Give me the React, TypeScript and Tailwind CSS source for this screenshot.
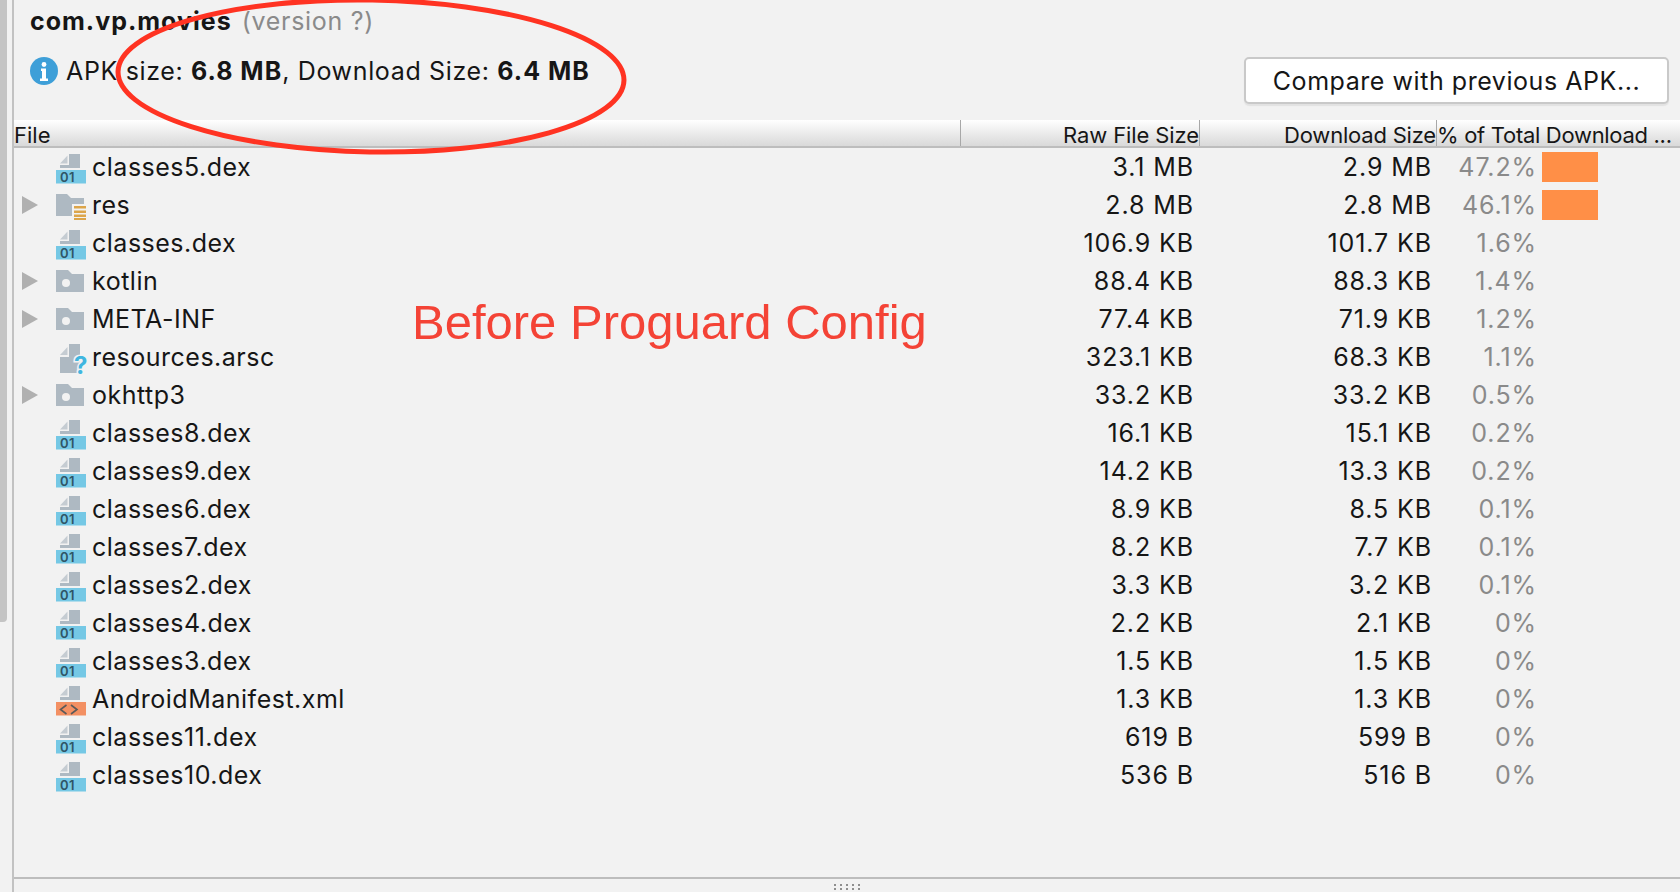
const rows = [
  { name: "classes5.dex", kind: "dex", raw: "3.1 MB", dl: "2.9 MB", pct: "47.2%", bar: true },
  { name: "res", kind: "res", raw: "2.8 MB", dl: "2.8 MB", pct: "46.1%", bar: true },
  { name: "classes.dex", kind: "dex", raw: "106.9 KB", dl: "101.7 KB", pct: "1.6%" },
  { name: "kotlin", kind: "folder", raw: "88.4 KB", dl: "88.3 KB", pct: "1.4%" },
  { name: "META-INF", kind: "folder", raw: "77.4 KB", dl: "71.9 KB", pct: "1.2%" },
  { name: "resources.arsc", kind: "unknown", raw: "323.1 KB", dl: "68.3 KB", pct: "1.1%" },
  { name: "okhttp3", kind: "folder", raw: "33.2 KB", dl: "33.2 KB", pct: "0.5%" },
  { name: "classes8.dex", kind: "dex", raw: "16.1 KB", dl: "15.1 KB", pct: "0.2%" },
  { name: "classes9.dex", kind: "dex", raw: "14.2 KB", dl: "13.3 KB", pct: "0.2%" },
  { name: "classes6.dex", kind: "dex", raw: "8.9 KB", dl: "8.5 KB", pct: "0.1%" },
  { name: "classes7.dex", kind: "dex", raw: "8.2 KB", dl: "7.7 KB", pct: "0.1%" },
  { name: "classes2.dex", kind: "dex", raw: "3.3 KB", dl: "3.2 KB", pct: "0.1%" },
  { name: "classes4.dex", kind: "dex", raw: "2.2 KB", dl: "2.1 KB", pct: "0%" },
  { name: "classes3.dex", kind: "dex", raw: "1.5 KB", dl: "1.5 KB", pct: "0%" },
  { name: "AndroidManifest.xml", kind: "xml", raw: "1.3 KB", dl: "1.3 KB", pct: "0%" },
  { name: "classes11.dex", kind: "dex", raw: "619 B", dl: "599 B", pct: "0%" },
  { name: "classes10.dex", kind: "dex", raw: "536 B", dl: "516 B", pct: "0%" },
];

function FileIcon({ kind }: { kind: string }) {
  if (kind === "folder") {
    return (
      <svg width="30" height="30" viewBox="0 0 30 30">
        <path d="M0 4h12l4 4h12v18H0z" fill="#aeb9c2" />
        <circle cx="10" cy="17" r="4" fill="#f2f2f2" />
      </svg>
    );
  }
  if (kind === "res") {
    return (
      <svg width="30" height="30" viewBox="0 0 30 30">
        <path d="M0 4h11l4 4h13v6H16v12H0z" fill="#aeb9c2" />
        <path d="M18 16h12v2.500H18zM18 20.500h12V23H18zM18 24.500h12V27H18zM18 28h12v2H18z" fill="#dca54a" />
      </svg>
    );
  }
  if (kind === "unknown") {
    return (
      <svg className="my-[-6px] mr-[-6px]" width="36" height="48" viewBox="0 -6 36 48">
        <path d="M13 5h11v29H4V18h9z" fill="#aeb9c2" />
        <path d="M4 16l7.500-8v8z" fill="#c5ccd2" />
        <text
          x="18"
          y="35"
          fontSize="24"
          fontWeight="700"
          fill="#40b6e0"
          stroke="#f2f2f2"
          strokeWidth="3"
          paintOrder="stroke"
          className="font-['Inter']"
        >
          ?
        </text>
      </svg>
    );
  }
  const xml = kind === "xml";
  return (
    <svg className="mt-[4px]" width="30" height="30" viewBox="0 0 30 30">
      <path d="M4 9.500l7.500-8v8z" fill="#c5ccd2" />
      <path d="M13 0h11v14H4v-3h9z" fill="#aeb9c2" />
      <path d="M0 16h30v13.500H0z" fill={xml ? "#f39063" : "#75c8e5"} />
      {xml ? (
        <path d="M10.500 19l-6 4.500 6 4.500M15 19l6 4.500-6 4.500" fill="none" stroke="#5a5a5a" strokeWidth="1.600" />
      ) : (
        <text x="4" y="28" fontSize="13" fontWeight="600" fill="#2f5566" className="font-['Inter']">
          01
        </text>
      )}
    </svg>
  );
}

export default function App() {
  return (
    <div className="relative flex h-[892px] w-[1680px] overflow-hidden bg-[#f2f2f2] font-['Inter',sans-serif] text-[#161616]">
      <div className="h-[622px] w-[7px] rounded-br-[4px] bg-[#c4c4c4]" />
      <div className="ml-[5px] flex min-w-0 flex-1 flex-col border-l-2 border-[#c2c2c2]">
        <div className="flex h-[120px] justify-between">
          <div className="pl-[16px]">
            <div className="flex h-[42px] items-center text-[25px] leading-none">
              <span className="font-bold tracking-[1px]">com.vp.movies</span>
              <span className="ml-[10px] tracking-[0.7px] text-[#8a8a8a]">(version ?)</span>
            </div>
            <div className="mt-[15px] flex items-center">
              <svg width="28" height="28" viewBox="0 0 28 28">
                <circle cx="14" cy="14" r="14" fill="#3e9fd8" />
                <circle cx="14" cy="7.500" r="2.400" fill="#fff" />
                <path d="M11 11.500h5v10h2v2.500h-8v-2.500h2v-7.500h-1z" fill="#fff" />
              </svg>
              <span className="ml-[8px] text-[25px] leading-none tracking-[0.65px]">
                APK size: <b className="tracking-[1px]">6.8 MB</b>, Download Size: <b className="tracking-[1px]">6.4 MB</b>
              </span>
            </div>
          </div>
          <button
            type="button"
            className="mt-[57px] mr-[11px] h-[47px] w-[425px] rounded-[5px] border-2 border-[#c9c9c9] bg-white pt-[2px] text-[25px] leading-none tracking-[0.55px] shadow-[0_2px_1px_#e2e2e2]"
          >
            Compare with previous APK...
          </button>
        </div>

        <div className="flex h-[28px] border-b-2 border-[#bdbdbd] bg-gradient-to-b from-white to-[#d9d9d9] text-[22px] leading-[30px]">
          <div className="h-full w-[947px] border-r border-[#a8a8a8]">File</div>
          <div className="h-full w-[239px] border-r border-[#a8a8a8] text-right tracking-[-0.1px] whitespace-nowrap">
            Raw File Size
          </div>
          <div className="h-full w-[237px] border-r border-[#a8a8a8] text-right tracking-[-0.2px] whitespace-nowrap">
            Download Size
          </div>
          <div className="h-full min-w-0 flex-1 tracking-[-0.3px] whitespace-nowrap">% of Total Download ...</div>
        </div>

        <div className="flex-1">
          {rows.map((row) => (
            <div key={row.name} className="flex h-[38px] items-center text-[25px] leading-none tracking-[0.5px]">
              <div className="flex w-[947px] items-center">
                <div className="ml-[8px] flex w-[34px] justify-start">
                  {row.kind === "folder" || row.kind === "res" ? (
                    <svg width="16" height="18" viewBox="0 0 16 18">
                      <path d="M0 0l16 9-16 9z" fill="#b0b0b0" />
                    </svg>
                  ) : null}
                </div>
                <FileIcon kind={row.kind} />
                <span className="ml-[6px]">{row.name}</span>
              </div>
              <div className="w-[233px] text-right tracking-[0.9px]">{row.raw}</div>
              <div className="ml-[7px] w-[231px] text-right tracking-[0.9px]">{row.dl}</div>
              <div className="ml-[7px] w-[98px] text-right tracking-[0.9px] text-[#8a8a8a]">{row.pct}</div>
              {row.bar ? <div className="ml-[5px] h-[30px] w-[56px] bg-[#ff8f47]" /> : null}
            </div>
          ))}
        </div>

        <div className="flex h-[15px] justify-center border-t-2 border-[#bdbdbd]">
          <div className="mt-[4px] h-[7px] w-[30px] bg-[radial-gradient(circle,#8f8f8f_1px,transparent_1px)] bg-[length:6px_4px]" />
        </div>
      </div>

      <svg className="pointer-events-none absolute top-0 left-0" width="700" height="170" viewBox="0 0 700 170">
        <ellipse cx="371" cy="76" rx="253" ry="76" fill="none" stroke="#ff3322" strokeWidth="5" transform="rotate(1 371 76)" />
      </svg>
      <div className="absolute top-[292px] left-[412px] font-['Liberation_Sans',sans-serif] text-[49px] leading-[60px] whitespace-nowrap text-[#f44336]">
        Before Proguard Config
      </div>
    </div>
  );
}
